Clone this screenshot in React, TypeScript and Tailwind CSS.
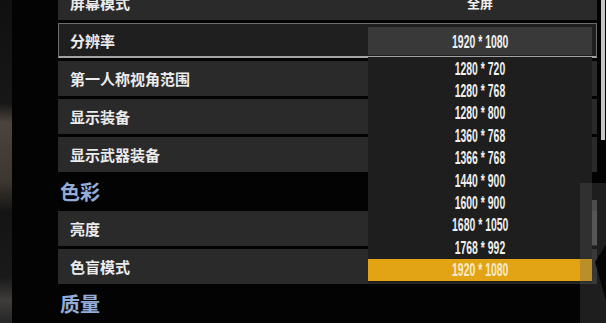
import React from 'react';

const resolutions = [
  '1280 * 720',
  '1280 * 768',
  '1280 * 800',
  '1360 * 768',
  '1366 * 768',
  '1440 * 900',
  '1600 * 900',
  '1680 * 1050',
  '1768 * 992',
  '1920 * 1080',
];

const cjk = "font-['Noto_Sans_CJK_SC','Noto_Sans',sans-serif]";
const narrow = "font-['Liberation_Sans_Narrow','Liberation_Sans',sans-serif]";

const Num: React.FC<{ text: string; className?: string }> = ({ text, className = '' }) => (
  <span className={`${narrow} inline-block scale-x-[0.55] text-[19px] font-semibold leading-none ${className}`}>
    {text}
  </span>
);

const Row: React.FC<{ label: string; value?: string }> = ({ label, value }) => (
  <div className="h-[35px] shrink-0 bg-[#2a2a2a] flex items-center pl-[12px] relative">
    <span className={`${cjk} text-[15px] font-semibold text-[#ececec] leading-none`}>{label}</span>
    {value && (
      <span className={`${cjk} absolute left-[310px] w-[224px] text-center text-[13px] font-semibold text-[#f2f2f2]`}>
        {value}
      </span>
    )}
  </div>
);

const Header: React.FC<{ label: string }> = ({ label }) => (
  <div className="h-[33px] shrink-0 flex items-center pl-[2px]">
    <span className={`${cjk} text-[20px] font-semibold text-[#93acd8] leading-none`}>{label}</span>
  </div>
);

const Dropdown: React.FC = () => (
  <div className="absolute left-[309px] top-[3px] w-[224px] z-10">
    <div className="h-[28px] bg-[#393939] flex items-center justify-center">
      <Num text="1920 * 1080" className="text-[#f2f2f2]" />
    </div>
    <div className="mt-[2px] bg-[#1e1e1e] pb-[2px]">
      {resolutions.map((r, i) => {
        const active = i === resolutions.length - 1;
        return (
          <div
            key={r}
            className={`h-[22.4px] flex items-center justify-center ${active ? 'bg-[#e2a414]' : ''}`}
          >
            <Num text={r} className={active ? 'text-[#f8ecce]' : 'text-[#f0f0f0]'} />
          </div>
        );
      })}
    </div>
  </div>
);

export default function App() {
  return (
    <div className="w-[606px] h-[323px] overflow-hidden bg-[#030303] flex relative">
      <div className="w-[12px] h-full shrink-0 bg-[linear-gradient(180deg,#101010_0%,#171717_32%,#4b443c_38%,#3d3731_56%,#141414_66%,#1a1a1a_86%,#3f3d3b_93%,#262626_100%)]" />
      <div className="w-[46px] shrink-0" />
      <div className="w-[539px] shrink-0 flex flex-col gap-[3px] mt-[-15px]">
        <Row label="屏幕模式" value="全屏" />
        <div className="h-[35px] shrink-0 bg-[#1f1f1f] border border-[#6c6c6c] border-b-2 border-b-[#a3a3a3] flex items-center pl-[11px] relative">
          <span className={`${cjk} text-[15px] font-semibold text-[#ececec] leading-none`}>分辨率</span>
          <Dropdown />
        </div>
        <Row label="第一人称视角范围" />
        <Row label="显示装备" />
        <Row label="显示武器装备" />
        <Header label="色彩" />
        <Row label="亮度" />
        <Row label="色盲模式" />
        <Header label="质量" />
      </div>
      <div className="w-[4px] shrink-0" />
      <div className="w-[4px] shrink-0">
        <div className="h-[140px] bg-[#c6c6c6]" />
      </div>

      <div className="absolute left-[580px] top-[183px] w-[26px] h-[140px] bg-[#5c5c5c]/30 z-20" />
      <div className="absolute left-[592px] top-[200px] w-[5px] h-[45px] bg-[#6a6a6a]/60 z-20" />
      <svg className="absolute left-[592px] top-[245px] z-20" width="14" height="56" viewBox="0 0 14 56">
        <polygon points="14,0 3,17 14,56" fill="#050505" />
      </svg>
    </div>
  );
}
